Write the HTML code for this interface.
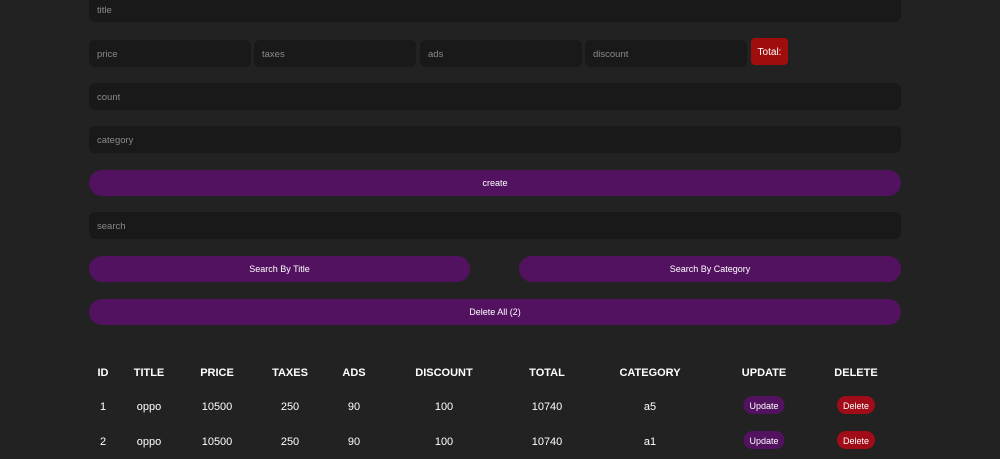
<!DOCTYPE html>
<html><head><style>
body{margin:0;background:#222;width:1000px;height:459px;overflow:hidden;position:relative;font-family:"Liberation Sans",sans-serif;}
.in{position:absolute;background:#191919;border-radius:6px;color:#8a8a8a;font-size:9.5px;padding-left:8px;box-sizing:border-box;height:27px;display:flex;align-items:center;padding-top:1px;}
.btn{position:absolute;background:#52125f;border-radius:13px;color:#fff;font-size:9px;text-align:center;line-height:26px;height:26px;}
.c{position:absolute;transform:translateX(-50%);color:#fff;white-space:nowrap;}
.h{font-weight:bold;font-size:11px;top:367px;}
.r{font-size:11px;}
.pill{position:absolute;transform:translateX(-50%);color:#fff;font-size:9px;border-radius:9px;height:18px;padding:1px 6px 0;box-sizing:border-box;display:flex;align-items:center;}
</style></head><body>
<div class="in" style="left:89px;top:-5px;width:812px;padding-top:3px;">title</div>
<div class="in" style="left:89px;top:40px;width:162px;">price</div>
<div class="in" style="left:254px;top:40px;width:162px;">taxes</div>
<div class="in" style="left:420px;top:40px;width:162px;">ads</div>
<div class="in" style="left:585px;top:40px;width:162px;">discount</div>
<div style="position:absolute;left:751px;top:38px;width:37px;height:27px;background:#a00d0d;border-radius:4px;color:#fff;font-size:10px;display:flex;align-items:center;justify-content:center;padding-top:2px;box-sizing:border-box;">Total:</div>
<div class="in" style="left:89px;top:83px;width:812px;">count</div>
<div class="in" style="left:89px;top:126px;width:812px;">category</div>
<div class="btn" style="left:89px;top:170px;width:812px;">create</div>
<div class="in" style="left:89px;top:212px;width:812px;">search</div>
<div class="btn" style="left:89px;top:256px;width:381px;">Search By Title</div>
<div class="btn" style="left:519px;top:256px;width:382px;">Search By Category</div>
<div class="btn" style="left:89px;top:299px;width:812px;">Delete All (2)</div>

<div class="c h" style="left:103px">ID</div>
<div class="c h" style="left:149px">TITLE</div>
<div class="c h" style="left:217px">PRICE</div>
<div class="c h" style="left:290px">TAXES</div>
<div class="c h" style="left:354px">ADS</div>
<div class="c h" style="left:444px">DISCOUNT</div>
<div class="c h" style="left:547px">TOTAL</div>
<div class="c h" style="left:650px">CATEGORY</div>
<div class="c h" style="left:764px">UPDATE</div>
<div class="c h" style="left:856px">DELETE</div>

<div class="c r" style="left:103px;top:401px">1</div>
<div class="c r" style="left:149px;top:401px">oppo</div>
<div class="c r" style="left:217px;top:401px">10500</div>
<div class="c r" style="left:290px;top:401px">250</div>
<div class="c r" style="left:354px;top:401px">90</div>
<div class="c r" style="left:444px;top:401px">100</div>
<div class="c r" style="left:547px;top:401px">10740</div>
<div class="c r" style="left:650px;top:401px">a5</div>
<div class="pill" style="left:764px;top:396px;background:#52125f">Update</div>
<div class="pill" style="left:856px;top:396px;background:#a00d18">Delete</div>

<div class="c r" style="left:103px;top:436px">2</div>
<div class="c r" style="left:149px;top:436px">oppo</div>
<div class="c r" style="left:217px;top:436px">10500</div>
<div class="c r" style="left:290px;top:436px">250</div>
<div class="c r" style="left:354px;top:436px">90</div>
<div class="c r" style="left:444px;top:436px">100</div>
<div class="c r" style="left:547px;top:436px">10740</div>
<div class="c r" style="left:650px;top:436px">a1</div>
<div class="pill" style="left:764px;top:431px;background:#52125f">Update</div>
<div class="pill" style="left:856px;top:431px;background:#a00d18">Delete</div>
</body></html>
